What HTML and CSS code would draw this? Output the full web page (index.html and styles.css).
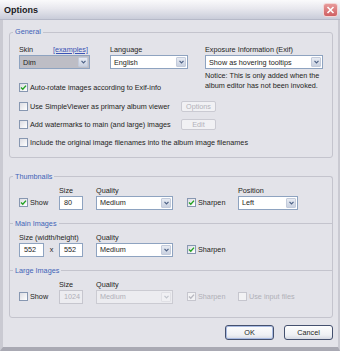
FILE: index.html
```html
<!DOCTYPE html>
<html lang="en">
<head>
    <meta charset="UTF-8">
    <meta name="viewport" content="width=device-width, initial-scale=1.0">
    <title>Options</title>
    <link rel="stylesheet" href="styles.css">
</head>
<body>
<div class="window">
    <div class="titlebar">
        <span class="title">Options</span>
        <span class="close-btn">
            <svg width="9" height="8" viewBox="0 0 9 8"><path d="M1.5 1L7.5 7M7.5 1L1.5 7" stroke="#fff" stroke-width="1.6" fill="none"/></svg>
        </span>
    </div>
    <div class="frame">
        <fieldset class="group">
            <legend>General</legend>
            <div class="group-body general-body">
                <div class="general-top">
                    <div class="general-left">
                        <div class="field-row">
                            <div class="field skin-field">
                                <div class="field-label"><span>Skin</span><span class="examples">[examples]</span></div>
                                <div class="select dim"><span>Dim</span><span class="arrow"><svg width="5" height="4" viewBox="0 0 5 4"><path d="M0.5 0.8L2.5 2.8L4.5 0.8" stroke="#4d6185" stroke-width="1.2" fill="none"/></svg></span></div>
                            </div>
                            <div class="field lang-field">
                                <div class="field-label">Language</div>
                                <div class="select"><span>English</span><span class="arrow"><svg width="5" height="4" viewBox="0 0 5 4"><path d="M0.5 0.8L2.5 2.8L4.5 0.8" stroke="#4d6185" stroke-width="1.2" fill="none"/></svg></span></div>
                            </div>
                        </div>
                        <div class="check-row first">
                            <span class="check-label"><span class="checkbox checked"><svg width="7" height="7" viewBox="0 0 7 7"><path d="M1 3.4L2.8 5.2L6 1.6" stroke="#21a121" stroke-width="1.4" fill="none"/></svg></span>Auto-rotate images according to Exif-info</span>
                        </div>
                        <div class="check-row">
                            <span class="check-label"><span class="checkbox"></span>Use SimpleViewer as primary album viewer</span>
                            <button class="btn small" disabled>Options</button>
                        </div>
                        <div class="check-row">
                            <span class="check-label"><span class="checkbox"></span>Add watermarks to main (and large) images</span>
                            <button class="btn small" disabled>Edit</button>
                        </div>
                    </div>
                    <div class="field exif-field">
                        <div class="field-label">Exposure Information (Exif)</div>
                        <div class="select"><span>Show as hovering tooltips</span><span class="arrow"><svg width="5" height="4" viewBox="0 0 5 4"><path d="M0.5 0.8L2.5 2.8L4.5 0.8" stroke="#4d6185" stroke-width="1.2" fill="none"/></svg></span></div>
                        <p class="notice">Notice: This is only added when the album editor has not been invoked.</p>
                    </div>
                </div>
                <div class="check-row">
                    <span class="check-label"><span class="checkbox"></span>Include the original image filenames into the album image filenames</span>
                </div>
            </div>
        </fieldset>

        <div class="image-groups">
            <fieldset class="group image-group top">
                <legend>Thumbnails</legend>
                <div class="group-body image-grid">
                    <span class="field-label col-2">Size</span>
                    <span class="field-label col-3">Quality</span>
                    <span class="field-label col-5">Position</span>
                    <span class="check-label"><span class="checkbox checked"><svg width="7" height="7" viewBox="0 0 7 7"><path d="M1 3.4L2.8 5.2L6 1.6" stroke="#21a121" stroke-width="1.4" fill="none"/></svg></span>Show</span>
                    <span class="input">80</span>
                    <div class="select"><span>Medium</span><span class="arrow"><svg width="5" height="4" viewBox="0 0 5 4"><path d="M0.5 0.8L2.5 2.8L4.5 0.8" stroke="#4d6185" stroke-width="1.2" fill="none"/></svg></span></div>
                    <span class="check-label"><span class="checkbox checked"><svg width="7" height="7" viewBox="0 0 7 7"><path d="M1 3.4L2.8 5.2L6 1.6" stroke="#21a121" stroke-width="1.4" fill="none"/></svg></span>Sharpen</span>
                    <div class="select narrow"><span>Left</span><span class="arrow"><svg width="5" height="4" viewBox="0 0 5 4"><path d="M0.5 0.8L2.5 2.8L4.5 0.8" stroke="#4d6185" stroke-width="1.2" fill="none"/></svg></span></div>
                </div>
            </fieldset>
            <fieldset class="group image-group middle">
                <legend>Main Images</legend>
                <div class="group-body image-grid">
                    <span class="field-label span-2">Size (width/height)</span>
                    <span class="field-label col-3">Quality</span>
                    <span class="size-pair"><span class="input wide">552</span><span class="times">x</span></span>
                    <span class="input">552</span>
                    <div class="select"><span>Medium</span><span class="arrow"><svg width="5" height="4" viewBox="0 0 5 4"><path d="M0.5 0.8L2.5 2.8L4.5 0.8" stroke="#4d6185" stroke-width="1.2" fill="none"/></svg></span></div>
                    <span class="check-label"><span class="checkbox checked"><svg width="7" height="7" viewBox="0 0 7 7"><path d="M1 3.4L2.8 5.2L6 1.6" stroke="#21a121" stroke-width="1.4" fill="none"/></svg></span>Sharpen</span>
                </div>
            </fieldset>
            <fieldset class="group image-group bottom">
                <legend>Large Images</legend>
                <div class="group-body image-grid">
                    <span class="field-label col-2">Size</span>
                    <span class="field-label col-3">Quality</span>
                    <span class="check-label"><span class="checkbox"></span>Show</span>
                    <span class="input disabled">1024</span>
                    <div class="select disabled"><span>Medium</span><span class="arrow"><svg width="5" height="4" viewBox="0 0 5 4"><path d="M0.5 0.8L2.5 2.8L4.5 0.8" stroke="#c0c4cc" stroke-width="1.2" fill="none"/></svg></span></div>
                    <span class="check-label disabled"><span class="checkbox checked"><svg width="7" height="7" viewBox="0 0 7 7"><path d="M1 3.4L2.8 5.2L6 1.6" stroke="#b8b8c0" stroke-width="1.4" fill="none"/></svg></span>Sharpen</span>
                    <span class="check-label disabled"><span class="checkbox"></span>Use input files</span>
                </div>
            </fieldset>
        </div>

        <div class="dialog-buttons">
            <button class="btn default">OK</button>
            <button class="btn">Cancel</button>
        </div>
    </div>
</div>
</body>
</html>
```

FILE: styles.css
```css
* {
    box-sizing: border-box;
}

body {
    margin: 0;
    font-family: "Liberation Sans", Arial, sans-serif;
    font-size: 7.25px;
    color: #1e1e22;
    background-color: #e3e3e9;
}

.window {
    width: 340px;
    height: 351px;
    display: flex;
    flex-direction: column;
}

.titlebar {
    height: 20px;
    display: flex;
    align-items: center;
    justify-content: space-between;
    padding: 0 2px 0 4px;
    background: linear-gradient(#fafafb, #e8e8ee 45%, #c9ccd9);
    border-bottom: 1px solid #b6b9c8;
}

.title {
    font-size: 9px;
    font-weight: bold;
    color: #1a1a1e;
}

.close-btn {
    width: 15px;
    height: 14px;
    display: flex;
    align-items: center;
    justify-content: center;
    border: 1px solid #f4d6d6;
    border-radius: 3px;
    background: linear-gradient(#e79a9a, #cf5f62);
}

.frame {
    flex: 1;
    padding: 7px 5px 0 6px;
    background-color: #e3e3e9;
    border-left: 3px solid #cacad2;
    border-right: 2px solid #cacad2;
    border-bottom: 4px solid #a9a9b3;
}

/* group boxes */
.group {
    margin: 0;
    padding: 0;
    min-width: 0;
    border: 1px solid #c4c4cd;
    border-radius: 3px;
}

.group legend {
    margin-left: 3px;
    padding: 0 2px;
    line-height: 10px;
    color: #4263b8;
}

.group-body {
    padding: 8px 9px 9px 9px;
}

.field-label {
    display: flex;
    justify-content: space-between;
    line-height: 9px;
    height: 9px;
    white-space: nowrap;
}

.examples {
    color: #3a53b5;
    text-decoration: underline;
    padding-right: 2px;
}

/* general */
.general-top {
    display: flex;
}

.general-left {
    width: 186px;
}

.field-row {
    display: flex;
    gap: 20px;
}

.skin-field {
    width: 71px;
}

.lang-field {
    width: 78px;
}

.exif-field {
    width: 118px;
}

.select {
    margin-top: 1px;
    height: 14px;
    display: flex;
    align-items: center;
    justify-content: space-between;
    padding: 0 1px 0 3px;
    background-color: #fff;
    border: 1px solid #8ea3c0;
    white-space: nowrap;
}

.select.dim {
    background-color: #bdbdc5;
}

.select.disabled {
    background-color: #ececf0;
    border-color: #cbcbd2;
    color: #b0b0b8;
}

.arrow {
    width: 10px;
    height: 10px;
    display: flex;
    align-items: center;
    justify-content: center;
    border: 1px solid #c3cbdb;
    border-radius: 1px;
    background: linear-gradient(#e7ebf3, #c9d1e0);
}

.select.disabled .arrow {
    background: #f0f0f3;
    border-color: #e0e0e5;
}

.notice {
    margin: 2px 0 0 0;
    line-height: 10px;
}

.check-row {
    height: 10px;
    margin-top: 8.6px;
    display: grid;
    grid-template-columns: 162px 35px;
    align-items: center;
}

.check-row.first {
    margin-top: 13px;
}

.check-label {
    display: flex;
    align-items: center;
    gap: 2px;
    white-space: nowrap;
}

.check-label.disabled {
    color: #b0b0b8;
}

.checkbox {
    width: 9px;
    height: 9px;
    flex: none;
    display: flex;
    align-items: center;
    justify-content: center;
    border: 1px solid #8797b1;
    background: linear-gradient(135deg, #dcdde3, #fff);
}

.check-label.disabled .checkbox {
    border-color: #c6c6ce;
    background: #f2f2f4;
}

/* buttons */
.btn {
    width: 49px;
    height: 15px;
    padding: 0;
    font: inherit;
    color: #1e1e22;
    border: 1px solid #44506e;
    border-radius: 3px;
    background: linear-gradient(#fdfdfd, #eef0f4 70%, #d6d9e3);
}

.btn.default {
    box-shadow: inset 0 0 0 1px #a9bbe2;
}

.btn.small {
    width: 35px;
    height: 11px;
    border-color: #cacad2;
    border-radius: 2px;
    background: #f1f1f4;
    color: #b2b2ba;
}

/* image groups */
.image-groups {
    margin-top: 14px;
}

.image-group .group-body {
    padding: 4px 9px 14px 9px;
}

.image-group.top {
    border-bottom: none;
    border-radius: 3px 3px 0 0;
}

.image-group.middle {
    margin-top: -5px;
    border-bottom: none;
    border-radius: 0;
}

.image-group.bottom {
    margin-top: -5px;
    border-radius: 0 0 3px 3px;
}

.image-group.bottom .group-body {
    padding-bottom: 13px;
}

.image-grid {
    display: grid;
    grid-template-columns: 40px 37px 91px 51px 60px;
    grid-template-rows: 9px 14px;
    row-gap: 1px;
    align-items: center;
}

.image-grid > .field-label {
    grid-row: 1;
}

.image-grid > :not(.field-label) {
    grid-row: 2;
}

.image-grid .select {
    margin-top: 0;
    width: 77px;
}

.image-grid .select.narrow {
    width: 60px;
}

.col-2 {
    grid-column: 2;
}

.col-3 {
    grid-column: 3;
}

.col-5 {
    grid-column: 5;
}

.span-2 {
    grid-column: 1 / span 2;
}

.input {
    width: 24px;
    height: 14px;
    display: flex;
    align-items: center;
    padding-left: 4px;
    background-color: #fff;
    border: 1px solid #8ea3c0;
}

.input.wide {
    width: 25px;
}

.input.disabled {
    background-color: #ececf0;
    border-color: #c6c6ce;
    color: #b0b0b8;
}

.size-pair {
    display: flex;
    align-items: center;
}

.times {
    flex: 1;
    text-align: center;
}

.dialog-buttons {
    display: flex;
    justify-content: flex-end;
    gap: 10px;
    margin-top: 7px;
}
```
